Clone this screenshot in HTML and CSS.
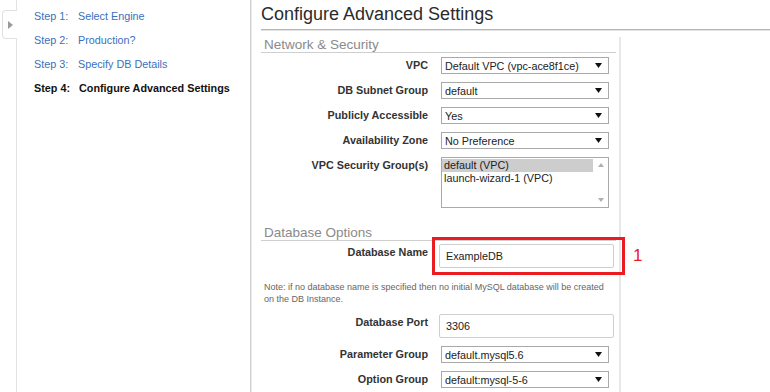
FILE: index.html
```html
<!DOCTYPE html>
<html lang="en">
<head>
<meta charset="utf-8">
<title>Configure Advanced Settings</title>
<link rel="stylesheet" href="styles.css">
</head>
<body>
<div class="page">
  <div class="rail">
    <div class="rail-tab">
      <svg class="rail-arrow" width="5" height="8" viewBox="0 0 5 8"><path d="M0 0 L5 4 L0 8 Z" fill="#9a9a9a"/></svg>
    </div>
  </div>
  <nav class="sidebar">
    <ul class="steps">
      <li class="step"><span class="step-num">Step 1:</span><span class="step-name">Select Engine</span></li>
      <li class="step"><span class="step-num">Step 2:</span><span class="step-name">Production?</span></li>
      <li class="step"><span class="step-num">Step 3:</span><span class="step-name">Specify DB Details</span></li>
      <li class="step step-current"><span class="step-num">Step 4:</span><span class="step-name">Configure Advanced Settings</span></li>
    </ul>
  </nav>
  <main class="main">
    <h1 class="title">Configure Advanced Settings</h1>
    <div class="panel">
      <section class="section">
        <h2 class="section-title">Network &amp; Security</h2>
        <div class="form">
          <div class="label">VPC</div>
          <div class="select"><span>Default VPC (vpc-ace8f1ce)</span><svg class="caret" width="7" height="5" viewBox="0 0 7 5"><path d="M0 0 H7 L3.5 5 Z" fill="#111"/></svg></div>
          <div class="label">DB Subnet Group</div>
          <div class="select"><span>default</span><svg class="caret" width="7" height="5" viewBox="0 0 7 5"><path d="M0 0 H7 L3.5 5 Z" fill="#111"/></svg></div>
          <div class="label">Publicly Accessible</div>
          <div class="select"><span>Yes</span><svg class="caret" width="7" height="5" viewBox="0 0 7 5"><path d="M0 0 H7 L3.5 5 Z" fill="#111"/></svg></div>
          <div class="label">Availability Zone</div>
          <div class="select"><span>No Preference</span><svg class="caret" width="7" height="5" viewBox="0 0 7 5"><path d="M0 0 H7 L3.5 5 Z" fill="#111"/></svg></div>
          <div class="label label-top">VPC Security Group(s)</div>
          <div class="listbox">
            <div class="options">
              <div class="option option-selected">default (VPC)</div>
              <div class="option">launch-wizard-1 (VPC)</div>
            </div>
            <div class="scrollbar">
              <svg width="6" height="4" viewBox="0 0 6 4"><path d="M0 4 L3 0 L6 4 Z" fill="#b0b0b0"/></svg>
              <svg width="6" height="4" viewBox="0 0 6 4"><path d="M0 0 H6 L3 4 Z" fill="#b0b0b0"/></svg>
            </div>
          </div>
        </div>
      </section>
      <section class="section section-db">
        <h2 class="section-title">Database Options</h2>
        <div class="form form-db">
          <div class="label label-top">Database Name</div>
          <div class="input-wrap input-marked">
            <div class="input">ExampleDB</div>
            <span class="marker">1</span>
          </div>
          <p class="note">Note: if no database name is specified then no initial MySQL database will be created on the DB Instance.</p>
          <div class="label label-top">Database Port</div>
          <div class="input-wrap">
            <div class="input">3306</div>
          </div>
          <div class="label">Parameter Group</div>
          <div class="select"><span>default.mysql5.6</span><svg class="caret" width="7" height="5" viewBox="0 0 7 5"><path d="M0 0 H7 L3.5 5 Z" fill="#111"/></svg></div>
          <div class="label">Option Group</div>
          <div class="select"><span>default:mysql-5-6</span><svg class="caret" width="7" height="5" viewBox="0 0 7 5"><path d="M0 0 H7 L3.5 5 Z" fill="#111"/></svg></div>
        </div>
      </section>
    </div>
  </main>
</div>
</body>
</html>
```

FILE: styles.css
```css
html, body {
  margin: 0;
  padding: 0;
  height: 100%;
  overflow: hidden;
  background: #fff;
}

body {
  font-family: "Liberation Sans", Arial, sans-serif;
  font-size: 10.8px;
  color: #333;
}

.page {
  display: flex;
  height: 392px;
}

/* left collapsed rail */
.rail {
  flex: none;
  width: 16px;
  border-right: 1px solid #e3e3e3;
}

.rail-tab {
  margin: 10px -1px 0 2px;
  height: 27px;
  border: 1px solid #e0e0e0;
  border-right: 0;
  border-radius: 4px 0 0 4px;
  background: #fff;
  display: flex;
  align-items: center;
  justify-content: center;
}

.rail-arrow {
  display: block;
  margin-left: 1px;
}

/* step sidebar */
.sidebar {
  flex: none;
  box-sizing: border-box;
  width: 234px;
  border-right: 1px solid #cfcfcf;
  box-shadow: 1px 0 0 #ececec;
  padding: 4px 0 0 17px;
}

.steps {
  list-style: none;
  margin: 0;
  padding: 0;
}

.step {
  display: flex;
  height: 24px;
  align-items: center;
  color: #3a70bd;
}

.step-num {
  width: 44px;
  flex: none;
}

.step-current {
  color: #111;
  font-weight: bold;
}

.step-current .step-num {
  width: 45px;
}

/* main content */
.main {
  flex: 1;
  min-width: 0;
  padding-left: 10px;
}

.title {
  margin: 0;
  padding: 3px 0 4px;
  font-size: 18px;
  line-height: 22px;
  font-weight: normal;
  color: #2b2b2b;
  border-bottom: 1px solid #b5b5b5;
  box-shadow: 0 1px 0 #e2e2e2;
}

.panel {
  margin-top: 7px;
  width: 358px;
  border-right: 2px solid #e8e8e8;
  padding-bottom: 20px;
}

.section-title {
  margin: 0 3px 0 0;
  padding: 1px 0 0 3px;
  font-size: 13.5px;
  line-height: 14px;
  font-weight: normal;
  color: #8a8a8a;
  border-bottom: 1px solid #cfcfcf;
}

.form {
  display: grid;
  grid-template-columns: 167px 168px;
  column-gap: 13px;
  row-gap: 8px;
  margin-top: 4px;
}

.label {
  font-weight: bold;
  text-align: right;
  color: #333;
  line-height: 17px;
}

.label-top {
  line-height: 14px;
  padding-top: 1px;
}

.select {
  box-sizing: border-box;
  height: 17px;
  border: 1px solid #a9a9a9;
  background: #fff;
  display: flex;
  align-items: center;
  justify-content: space-between;
  padding: 0 6px 0 3px;
  color: #222;
}

.caret {
  display: block;
}

.listbox {
  box-sizing: border-box;
  height: 51px;
  border: 1px solid #a9a9a9;
  display: flex;
  color: #222;
}

.options {
  flex: 1;
  padding-top: 1px;
}

.option {
  line-height: 13px;
  padding-left: 2px;
}

.option-selected {
  background: #cdcdcd;
}

.scrollbar {
  width: 15px;
  display: flex;
  flex-direction: column;
  justify-content: space-between;
  align-items: center;
  padding: 5px 0 5px;
}

.scrollbar svg {
  display: block;
}

.section-db {
  margin-top: 17px;
}

.form-db {
  margin-top: 3px;
}

.input-wrap {
  position: relative;
  margin-left: -2px;
  width: 175px;
}

.input {
  box-sizing: border-box;
  height: 24px;
  border: 1px solid #cfcfcf;
  border-radius: 2px;
  padding: 0 6px;
  display: flex;
  align-items: center;
  color: #222;
  background: #fff;
}

/* annotation overlay */
.input-marked::after {
  content: "";
  position: absolute;
  top: -7px;
  left: -7px;
  right: -11px;
  bottom: -7px;
  border: 3px solid #ea1c22;
}

.marker {
  position: absolute;
  left: calc(100% + 19px);
  top: 50%;
  transform: translateY(-50%);
  font-size: 17px;
  line-height: 18px;
  color: #ea1c22;
}

.note {
  grid-column: 1 / -1;
  margin: 5px 0 1px;
  padding-left: 3px;
  font-size: 9px;
  line-height: 12px;
  color: #666;
  max-width: 350px;
}
```
